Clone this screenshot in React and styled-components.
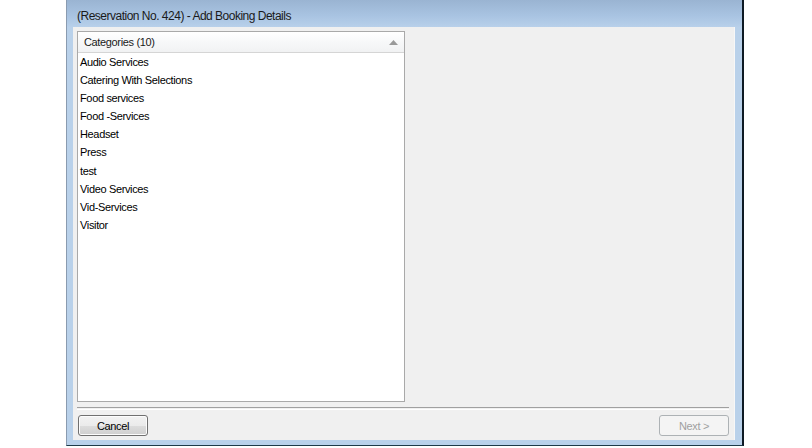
import React from "react";
import styled, { createGlobalStyle } from "styled-components";

const Global = createGlobalStyle`
  html, body { margin: 0; padding: 0; background: #ffffff; }
  body { font-family: "Liberation Sans", Arial, sans-serif; }
`;

const Page = styled.div`
  width: 812px;
  height: 448px;
  padding-left: 66px;
  box-sizing: border-box;
  background: #ffffff;
`;

const Window = styled.div`
  width: 678px;
  height: 446px;
  box-sizing: border-box;
  border-left: 1px solid #8a9bb0;
  border-right: 2px solid #0e1a24;
  border-bottom: 1px solid #1d3a48;
  background: #b9d1ea;
  display: flex;
  flex-direction: column;
`;

const TitleBar = styled.div`
  height: 27px;
  flex: none;
  box-sizing: border-box;
  padding: 9px 0 0 10px;
  background: linear-gradient(#9ab4d2, #a9c4e2 60%, #b8d0ea);
  font-size: 12px;
  color: #1a1a1a;
  letter-spacing: -0.5px;
`;

const Frame = styled.div`
  flex: 1;
  display: flex;
  padding: 0 7px 5px 6px;
  min-height: 0;
`;

const Content = styled.div`
  flex: 1;
  background: #f0f0f0;
  border-right: 1px solid #f7f7f7;
  display: flex;
  flex-direction: column;
  padding: 4px 5px 4px 4px;
  box-sizing: border-box;
`;

const ListBox = styled.div`
  width: 328px;
  height: 371px;
  box-sizing: border-box;
  border: 1px solid #a9a9a9;
  background: #ffffff;
  display: flex;
  flex-direction: column;
`;

const Header = styled.div`
  height: 21px;
  flex: none;
  box-sizing: border-box;
  border-bottom: 1px solid #d5d5d5;
  background: linear-gradient(#ffffff, #f7f8f9 50%, #f1f2f3);
  display: flex;
  align-items: center;
  justify-content: space-between;
  padding: 0 6px 0 6px;
  font-size: 11px;
  letter-spacing: -0.35px;
  color: #1a1a1a;
`;

const SortArrow = styled.svg`
  width: 9px;
  height: 5px;
  margin-top: 1px;
`;

const Item = styled.div`
  height: 18.1px;
  line-height: 18px;
  padding-left: 2px;
  font-size: 11px;
  letter-spacing: -0.35px;
  color: #000;
  white-space: nowrap;
`;

const Separator = styled.div`
  margin-top: 5px;
  height: 1px;
  border-top: 1px solid #a0a0a0;
  border-bottom: 1px solid #ffffff;
`;

const ButtonRow = styled.div`
  margin-top: 5px;
  display: flex;
  justify-content: space-between;
  padding-left: 1px;
`;

const Button = styled.button`
  width: 70px;
  height: 21px;
  box-sizing: border-box;
  border: 1px solid ${(p) => (p.disabled ? "#adb2b5" : "#707070")};
  border-radius: 3px;
  background: ${(p) =>
    p.disabled
      ? "#f4f4f4"
      : "linear-gradient(#f2f2f2, #ebebeb 50%, #dddddd 51%, #cfcfcf)"};
  font-family: "Liberation Sans", Arial, sans-serif;
  font-size: 11px;
  letter-spacing: -0.35px;
  color: ${(p) => (p.disabled ? "#a0a0a0" : "#000")};
  padding: 0;
  box-shadow: ${(p) => (p.disabled ? "none" : "inset 0 0 0 1px #fcfcfc")};
`;

const items = [
  "Audio Services",
  "Catering With Selections",
  "Food services",
  "Food -Services",
  "Headset",
  "Press",
  "test",
  "Video Services",
  "Vid-Services",
  "Visitor",
];

export default function App() {
  return (
    <>
      <Global />
      <Page>
        <Window>
          <TitleBar>(Reservation No. 424) - Add Booking Details</TitleBar>
          <Frame>
            <Content>
              <ListBox>
                <Header>
                  <span>Categories (10)</span>
                  <SortArrow viewBox="0 0 9 5">
                    <path d="M0 5 L4.5 0 L9 5 Z" fill="#9a9a9a" />
                  </SortArrow>
                </Header>
                {items.map((t) => (
                  <Item key={t}>{t}</Item>
                ))}
              </ListBox>
              <Separator />
              <ButtonRow>
                <Button>Cancel</Button>
                <Button disabled>Next &gt;</Button>
              </ButtonRow>
            </Content>
          </Frame>
        </Window>
      </Page>
    </>
  );
}
